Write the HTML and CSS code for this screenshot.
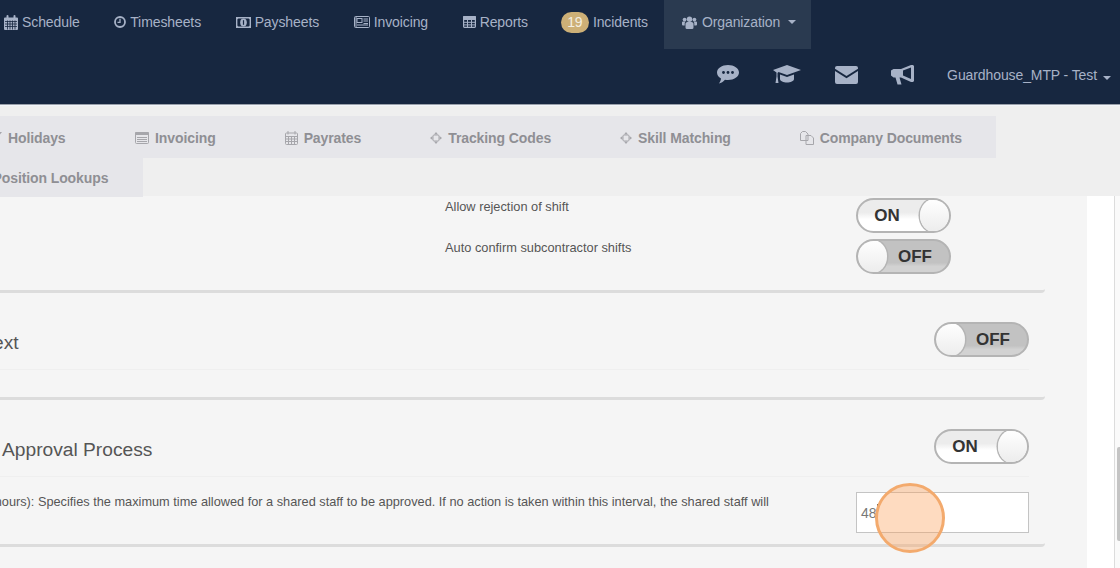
FILE: index.html
```html
<!DOCTYPE html>
<html lang="en">
<head>
<meta charset="utf-8">
<title>Organization settings</title>
<link rel="stylesheet" href="styles.css">
</head>
<body>
<header class="topbar">
  <nav class="mainnav">
    <a class="navitem first">
      <svg class="ico" width="14" height="15" viewBox="0 0 14 15"><path d="M0 3.500a1 1 0 0 1 1-1h1.500v-1.500a1 1 0 0 1 2 0v1.500h5v-1.500a1 1 0 0 1 2 0v1.500h1.500a1 1 0 0 1 1 1v10.500a1 1 0 0 1-1 1h-12a1 1 0 0 1-1-1z"/><path class="cut" d="M1 6.500h12M1 9h12M1 11.500h12M3.500 5.500v9M6 5.500v9M8.500 5.500v9M11 5.500v9" fill="none" stroke-width=".8"/></svg>
      Schedule</a>
    <a class="navitem">
      <svg class="ico" width="12" height="12" viewBox="0 0 12 12"><circle cx="6" cy="6" r="5" fill="none" class="line" stroke-width="1.800"/><path d="M6 2.800v3.500h-2.500" fill="none" class="line" stroke-width="1.300"/></svg>
      Timesheets</a>
    <a class="navitem">
      <svg class="ico" width="15" height="11" viewBox="0 0 15 11"><rect x=".7" y=".7" width="13.600" height="9.600" rx="1" fill="none" class="line" stroke-width="1.400"/><path d="M0 0h3.500L0 3.500zM15 0h-3.500L15 3.500zM0 11h3.500L0 7.500zM15 11h-3.500L15 7.500z"/><ellipse cx="7.500" cy="5.500" rx="3.300" ry="4"/><path class="cut" d="M7.500 3.200v4.600" fill="none" stroke-width="1.200"/></svg>
      Paysheets</a>
    <a class="navitem">
      <svg class="ico" width="16" height="12" viewBox="0 0 16 12"><rect x=".5" y=".5" width="15" height="11" rx="1" fill="none" class="line"/><rect x="3" y="2.500" width="5" height="4" fill="none" class="line"/><path d="M9.500 3h4.500M9.500 5h4.500M9.500 7.500h4.500M3 9h11" fill="none" class="line"/><path d="M2 1v10" fill="none" class="line"/></svg>
      Invoicing</a>
    <a class="navitem">
      <svg class="ico" width="13" height="12" viewBox="0 0 13 12"><rect x=".6" y=".6" width="11.800" height="10.800" rx=".8" fill="none" class="line" stroke-width="1.200"/><path d="M0 3.500h13M.6 6.300h12M.6 8.900h12M4.500 3v8M8.500 3v8" fill="none" class="line"/><rect width="13" height="3" rx="1"/></svg>
      Reports</a>
    <a class="navitem incidents"><span class="badge">19</span>Incidents</a>
    <a class="navitem active">
      <svg class="ico" width="15" height="13" viewBox="0 0 15 13"><circle cx="7.500" cy="3.200" r="2.700"/><path d="M3.500 7.500a2 2 0 0 1 2-1.500h4a2 2 0 0 1 2 1.500v4a1.500 1.500 0 0 1-1.500 1.500h-5a1.500 1.500 0 0 1-1.500-1.500z"/><circle cx="2.600" cy="3.600" r="1.900"/><circle cx="12.400" cy="3.600" r="1.900"/><path d="M0 6.500a1 1 0 0 1 1-1h2.500a3 3 0 0 0-.8 2v2h-1.700a1 1 0 0 1-1-1zM15 6.500a1 1 0 0 0-1-1h-2.500a3 3 0 0 1 .8 2v2h1.700a1 1 0 0 0 1-1z"/></svg>
      Organization<i class="caret"></i></a>
  </nav>
  <div class="usernav">
    <svg class="bigico" width="22" height="19" viewBox="0 0 22 19"><path d="M11 0c6 0 11 3.200 11 7.500S17 15 11 15c-1 0-2-.1-3-.3C6.500 16.500 4 18 1.800 18.500c1.200-1.300 2-3 2.200-5C1.500 12.200 0 10 0 7.500 0 3.200 5 0 11 0z"/><circle class="dot" cx="6.500" cy="7.500" r="1.400"/><circle class="dot" cx="11" cy="7.500" r="1.400"/><circle class="dot" cx="15.500" cy="7.500" r="1.400"/></svg>
    <svg class="bigico" width="28" height="20" viewBox="0 0 28 20"><path d="M14 0 28 5 14 10 5.500 7 4.500 8v3.500l1 6.500h-3l1-6.500V7.500L0 5z"/><path d="M7 9.500 14 12l7-2.500v4.500c0 2-3.500 3.500-7 3.500s-7-1.500-7-3.500z"/></svg>
    <svg class="bigico" width="23" height="18" viewBox="0 0 23 18"><path d="M2 0h19a2 2 0 0 1 2 2v.8L11.500 10 0 2.800V2a2 2 0 0 1 2-2z"/><path d="M0 5l11.500 7.200L23 5v11a2 2 0 0 1-2 2H2a2 2 0 0 1-2-2z"/></svg>
    <svg class="bigico horn" width="24" height="20" viewBox="0 0 24 20"><path d="M20 0h2l1 1v15l-1 1h-2L10 12.500H8.500l2 7H6.500l-2-7H2.500L0 10.500v-5L2.500 4H10z"/><path class="fillcut" d="M12 5.500 20 2.500v11.500L12 10.500z"/></svg>
    <a class="user">Guardhouse_MTP - Test<i class="caret"></i></a>
  </div>
</header>

<section class="subbar">
  <div class="tabrow rowone">
    <a class="tab clipped">
      <svg class="tabico" width="13" height="13" viewBox="0 0 13 13"><path d="M0 0h13L8 6.500V13H5V6.500z"/></svg>
      Holidays</a>
    <a class="tab">
      <svg class="tabico" width="14" height="12" viewBox="0 0 14 12"><rect x=".5" y=".5" width="13" height="11" rx="1" fill="none" class="line"/><rect width="14" height="3" rx="1"/><path d="M2 5.500h10M2 7.500h10M2 9.500h10" fill="none" class="line"/></svg>
      Invoicing</a>
    <a class="tab">
      <svg class="tabico" width="13" height="14" viewBox="0 0 13 14"><rect x=".5" y="2" width="12" height="11.500" rx="1" fill="none" class="line"/><path d="M3 0v3.500M10 0v3.500" fill="none" class="line" stroke-width="1.500"/><path d="M1 5.500h11M1 8h11M1 10.500h11M3.500 5v8M6.500 5v8M9.500 5v8" fill="none" class="line" stroke-width=".7"/></svg>
      Payrates</a>
    <a class="tab">
      <svg class="tabico" width="12" height="12" viewBox="0 0 12 12"><path d="M6 0 8 2.500H4zM6 12 8 9.500H4zM0 6l2.500-2v4zM12 6 9.500 4v4z"/><rect x="3" y="3" width="6" height="6" rx="1" fill="none" class="line"/></svg>
      Tracking Codes</a>
    <a class="tab">
      <svg class="tabico" width="12" height="12" viewBox="0 0 12 12"><path d="M6 0 8 2.500H4zM6 12 8 9.500H4zM0 6l2.500-2v4zM12 6 9.500 4v4z"/><rect x="3" y="3" width="6" height="6" rx="1" fill="none" class="line"/></svg>
      Skill Matching</a>
    <a class="tab">
      <svg class="tabico" width="14" height="14" viewBox="0 0 14 14"><path d="M2.500.5h3L8 3v6.500H.5V2.500z" fill="none" class="line"/><path d="M6 4.500h5l2.500 2.500v6.500H6z" fill="none" class="line"/></svg>
      Company Documents</a>
  </div>
  <div class="tabrow rowtwo">
    <a class="tab clippedtwo">Position Lookups</a>
  </div>
</section>

<main class="workarea">
  <div class="panel">
    <section class="block blockone">
      <div class="setting">
        <span class="label">Allow rejection of shift</span>
        <div class="toggle on"><b>ON</b><i class="knob"></i></div>
      </div>
      <div class="setting">
        <span class="label">Auto confirm subcontractor shifts</span>
        <div class="toggle off"><i class="knob"></i><b>OFF</b></div>
      </div>
    </section>
    <section class="block blocktwo">
      <div class="headrow">
        <h2 class="headtext clippedhead">ext</h2>
        <div class="toggle off"><i class="knob"></i><b>OFF</b></div>
      </div>
    </section>
    <section class="block blockthree">
      <div class="headrow">
        <h2 class="headtext indented">Approval Process</h2>
        <div class="toggle on"><b>ON</b><i class="knob"></i></div>
      </div>
      <div class="inputrow">
        <p class="desc">(in hours): Specifies the maximum time allowed for a shared staff to be approved. If no action is taken within this interval, the shared staff will</p>
        <div class="field"><span class="value">48</span></div>
      </div>
    </section>
  </div>
  <div class="gutter"></div>
  <div class="track"></div>
</main>
<div class="thumb"></div>
<div class="clickmark"></div>
</body>
</html>
```
FILE: styles.css
```css
* { box-sizing: border-box; }
html, body { margin: 0; height: 568px; overflow: hidden; }
body { font-family: "Liberation Sans", Arial, sans-serif; background: #fff; color: #555; position: relative; }
a { display: block; }

.topbar { height: 105px; background: #172740; border-bottom: 1px solid #9aa0aa; color: #a7b2c7; font-size: 14px; }
.ico, .bigico, .tabico { flex: none; fill: currentColor; }
.line { stroke: currentColor; }
.cut { stroke: #172740; }
.fillcut { fill: #172740; }
.dot { fill: #172740; }

.mainnav { display: flex; height: 49px; }
.navitem { display: flex; align-items: center; gap: 4px; padding: 0 17.3px 5px; white-space: nowrap; letter-spacing: -.1px; }
.navitem.first { padding-left: 4px; }
.incidents { padding-left: 15.6px; padding-right: 15.9px; }
.badge { width: 28px; height: 21px; border-radius: 11px; background: #cdb077; color: #f4efe2; text-align: center; line-height: 21px; }
.active { gap: 5px; background: #2a3a50; padding: 0 15px 5px 18px; }
.caret { display: inline-block; width: 0; height: 0; margin-left: 3.2px; border-left: 4px solid transparent; border-right: 4px solid transparent; border-top: 4px solid currentColor; }

.usernav { display: flex; align-items: center; justify-content: flex-end; gap: 34px; height: 55px; padding: 0 9px 4px 0; }
.horn { margin-left: -1px; }
.user { margin-left: -2px; white-space: nowrap; letter-spacing: -.1px; }
.user .caret { margin-left: 6px; }

.subbar { height: 91px; padding-top: 10px; background: #efefef; border-top: 1px solid #f2f5fa; position: relative; }
.tabrow { display: flex; background: #e6e6ea; color: #8f8f94; font-size: 14px; font-weight: 700; letter-spacing: -.1px; }
.rowone { width: 996px; height: 42px; padding-top: 2px; }
.rowtwo { width: 143px; height: 39px; }
.tab { display: flex; align-items: center; gap: 6px; padding: 0 34.5px; white-space: nowrap; }
.tab .line { stroke-width: 1; }
.tabico { color: #a6a6ab; }
.clipped { margin-left: -45.5px; padding-right: 35px; }
.clippedtwo { margin-left: -42px; }

.workarea { display: flex; height: 372px; }
.panel { flex: none; width: 1087px; background: #f5f5f5; }
.gutter { flex: none; width: 27px; background: #fff; }
.track { flex: 1; background: #fafafa; border-left: 1px solid #dcdcdc; }

.block { width: 1045px; border-bottom: 3px solid #dcdcdc; border-bottom-right-radius: 4px; }
.blockone { height: 97px; padding: 2px 94px 0 445px; display: flex; flex-direction: column; gap: 6px; }
.setting { display: flex; justify-content: space-between; align-items: flex-start; }
.label { font-size: 12.8px; color: #555; padding-top: 1px; line-height: 16px; }

.toggle { flex: none; display: flex; align-items: center; width: 95px; height: 35px; border: 2px solid #b4b4b4; border-radius: 18px; font-size: 17px; color: #333; overflow: hidden; }
.toggle b { flex: 1; text-align: center; }
.toggle.on b { padding-right: 4px; }
.toggle.off b { padding-right: 6px; }
.toggle.on { background: linear-gradient(#ececec 0 40%, #fff 62%); }
.toggle.off { background: linear-gradient(#c2c2c2 0 70%, #d2d2d2 82%); }
.knob { flex: none; width: 29px; height: 33px; border-radius: 50%; background: linear-gradient(#fff, #ececec); box-shadow: 0 0 0 1.500px #b4b4b4; }

.headrow { display: flex; justify-content: space-between; align-items: center; height: 77px; margin-right: 16px; padding: 29px 0 12px; border-bottom: 1px solid #efefef; }
.blocktwo { height: 107px; }
.blockthree { height: 147px; }
.headtext { margin: 6px 0 0; font-size: 19.2px; font-weight: 400; line-height: 28px; color: #555; }
.clippedhead { margin-left: -7px; }
.indented { margin-left: 2px; }
.inputrow { display: flex; justify-content: space-between; align-items: flex-start; padding: 15px 16px 0 0; }
.desc { margin: 2px 0 0 -23px; font-size: 12.75px; line-height: 16px; color: #555; white-space: nowrap; }
.field { flex: none; width: 173px; height: 41px; padding: 0 4px; display: flex; align-items: center; background: #fff; border: 1px solid #c4c4c4; font-size: 14px; color: #777; }
.value { border-right: 1px solid #555; line-height: 18px; }

.thumb { position: absolute; left: 1117px; top: 447px; width: 3px; height: 94px; background: #c4c4c4; border-radius: 2px 0 0 2px; }
.clickmark { position: absolute; left: 875px; top: 483px; width: 70px; height: 70px; border-radius: 50%; background: rgba(252, 160, 90, .38); border: 3px solid #f3aa6d; }
```
